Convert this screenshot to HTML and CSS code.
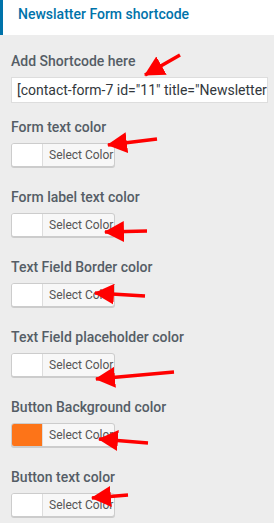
FILE: index.html
```html
<!DOCTYPE html>
<html>
<head>
<meta charset="utf-8">
<link rel="stylesheet" href="styles.css">
</head>
<body>
<div class="page">
  <div class="header">Newslatter Form shortcode</div>
  <div class="content">
    <div class="group first">
      <div class="label">Add Shortcode here</div>
      <div class="input">[contact-form-7 id="11" title="Newsletter"]</div>
    </div>
    <div class="group">
      <div class="label">Form text color</div>
      <div class="picker"><span class="swatch"></span><span class="btn">Select Color</span></div>
    </div>
    <div class="group">
      <div class="label">Form label text color</div>
      <div class="picker"><span class="swatch"></span><span class="btn">Select Color</span></div>
    </div>
    <div class="group">
      <div class="label">Text Field Border color</div>
      <div class="picker"><span class="swatch"></span><span class="btn">Select Color</span></div>
    </div>
    <div class="group">
      <div class="label">Text Field placeholder color</div>
      <div class="picker"><span class="swatch"></span><span class="btn">Select Color</span></div>
    </div>
    <div class="group">
      <div class="label">Button Background color</div>
      <div class="picker"><span class="swatch orange"></span><span class="btn">Select Color</span></div>
    </div>
    <div class="group">
      <div class="label">Button text color</div>
      <div class="picker"><span class="swatch"></span><span class="btn">Select Color</span></div>
    </div>
  </div>
  <svg class="arrows" width="274" height="523" viewBox="0 0 274 523">
    <defs>
      <marker id="head" markerWidth="21" markerHeight="21" refX="19" refY="10.5" orient="auto" markerUnits="userSpaceOnUse">
        <path d="M0,0 L20,10.5 L0,21 Z" fill="#f00"/>
      </marker>
    </defs>
    <g stroke="#f00" stroke-width="3.5" fill="none" marker-end="url(#head)">
      <line x1="180" y1="55" x2="145" y2="75"/>
      <line x1="157" y1="139" x2="108" y2="145"/>
      <line x1="147" y1="231" x2="105" y2="232"/>
      <line x1="145" y1="296" x2="95" y2="293"/>
      <line x1="174" y1="372" x2="96" y2="379"/>
      <line x1="148" y1="443" x2="99" y2="439"/>
      <line x1="128" y1="495" x2="92" y2="498"/>
    </g>
  </svg>
</div>
</body>
</html>
```

FILE: styles.css
```css
html, body {
  margin: 0;
  padding: 0;
}
body {
  background: #ededed;
  font-family: Roboto, "Liberation Sans", sans-serif;
}
.page {
  position: relative;
  width: 274px;
  height: 523px;
  overflow: hidden;
}
.header {
  height: 35px;
  box-sizing: border-box;
  background: #fff;
  border-left: 3px solid #0073aa;
  padding-left: 15px;
  font-size: 14px;
  font-weight: 500;
  line-height: 28px;
  color: #0073aa;
}
.content {
  padding: 16px 6px 0 11px;
}
.group {
  margin-bottom: 20px;
}
.group.first {
  margin-bottom: 14px;
}
.label {
  font-size: 14px;
  font-weight: 500;
  line-height: 20px;
  color: #555d66;
  margin-bottom: 6px;
}
.input {
  height: 26px;
  box-sizing: border-box;
  background: #fff;
  border: 1px solid #ddd;
  padding: 0 5px;
  font-size: 14px;
  line-height: 24px;
  color: #32373c;
  white-space: nowrap;
  overflow: hidden;
}
.picker {
  display: flex;
  width: 104px;
  height: 24px;
  box-sizing: border-box;
  border: 1px solid #ccc;
  border-radius: 3px;
  box-shadow: 0 1px 0 #ccc;
  overflow: hidden;
  background: #f7f7f7;
}
.swatch {
  width: 30px;
  background: #fff;
  border-right: 1px solid #ddd;
}
.swatch.orange {
  background: #fd7418;
}
.btn {
  flex: 1;
  font-size: 12px;
  line-height: 22px;
  color: #555;
  padding-left: 6px;
}
.arrows {
  position: absolute;
  left: 0;
  top: 0;
  pointer-events: none;
}
```
